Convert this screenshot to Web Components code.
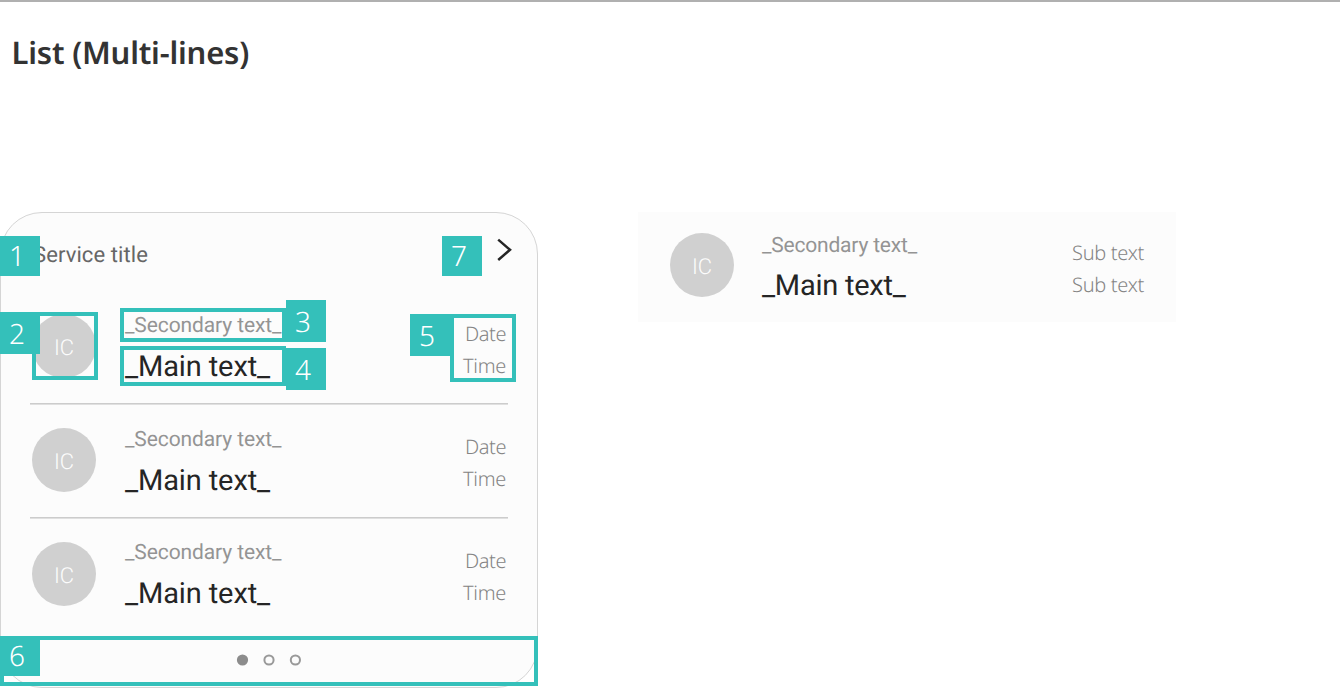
<!DOCTYPE html>
<html lang="en"><head><meta charset="utf-8"><title>List (Multi-lines)</title>
<style>html,body{margin:0;height:688px;overflow:hidden;background:#fff;text-rendering:geometricPrecision;-webkit-font-smoothing:antialiased}</style></head>
<body><guide-page></guide-page>
<script>
// Text line whose tracking is adjusted so that it fills the given advance width.
class FitText extends HTMLElement {
  connectedCallback() {
    this.attachShadow({mode:'open'}).innerHTML = `<style>:host{display:block;white-space:pre;width:max-content}span{display:inline-block}</style><span><slot></slot></span>`;
    const w = parseFloat(this.getAttribute('w')), s = this.shadowRoot.querySelector('span');
    if (w) s.style.letterSpacing = (w - s.getBoundingClientRect().width) / this.textContent.length + 'px';
  }
}

class ListRow extends HTMLElement {
  connectedCallback() {
    const a = this.getAttribute('first'), b = this.getAttribute('second'), w = this.getAttribute('sub-w').split(',');
    this.attachShadow({mode:'open'}).innerHTML = `<style>
      :host{display:flex;box-sizing:border-box;height:114px;padding:20px 32px 0}
      .ic{width:64px;height:64px;border-radius:50%;background:#d0d0d0;color:#fcfcfc;display:flex;justify-content:center;font:300 22px/70px Roboto,sans-serif;margin-top:var(--ic-top,4.4px)}
      .main{margin-left:var(--text-gap,29px);flex:1;color:#252525;font:29px/40px Roboto,sans-serif;padding-top:var(--main-top,1px)}
      .sec{color:#949494;font-size:21px;line-height:30px;margin-bottom:var(--line-gap,6px)}
      .sub{display:flex;flex-direction:column;align-items:flex-end;font:300 20px/32px "Noto Sans",sans-serif;color:#848484;padding-top:var(--sub-top,8px)}
    </style>
    <div class="ic"><fit-text w="20">IC</fit-text></div>
    <div class="main"><fit-text class="sec" w="${this.getAttribute('sec-w')||156.5}">_Secondary text_</fit-text><fit-text w="${this.getAttribute('main-w')||145}">_Main text_</fit-text></div>
    <div class="sub"><fit-text w="${w[0]}">${a}</fit-text><fit-text w="${w[1]}">${b}</fit-text></div>`;
  }
}

class CallOut extends HTMLElement {
  connectedCallback() {
    const [x,y,h] = this.getAttribute('at').split(',');
    this.attachShadow({mode:'open'}).innerHTML = `<style>
      :host{position:absolute;left:${x}px;top:${y}px;width:40px;height:${h}px;box-sizing:border-box;padding-left:9px;background:#34c0ba;color:#fff;font:300 28px/${+h===42?44:40}px "Noto Sans",sans-serif}
    </style><slot></slot>`;
  }
}

class CallFrame extends HTMLElement {
  connectedCallback() {
    const [x,y,w,h] = this.getAttribute('at').split(',');
    this.attachShadow({mode:'open'}).innerHTML = `<style>
      :host{position:absolute;box-sizing:border-box;border:4px solid #34c0ba;left:${x}px;top:${y}px;width:${w}px;height:${h}px}</style>`;
  }
}

class ServiceCard extends HTMLElement {
  connectedCallback() {
    this.attachShadow({mode:'open'}).innerHTML = `<style>
      :host{display:flex;flex-direction:column;box-sizing:border-box;width:538px;height:476px;border:1px solid #d5d5d5;border-radius:42px;background:#fcfcfc}
      header{height:77px;display:flex;justify-content:space-between;box-sizing:border-box;padding:24px 24px 0 32px;font:22px/38px Roboto,sans-serif;color:#666}
      .rows{margin:0 -1px}
      footer{display:flex;justify-content:center;padding-top:22px}
    </style>
    <header><fit-text w="115">Service title</fit-text><svg width="18" height="24"><path d="M3.2 2.6 15 12.8 3.2 23" fill="none" stroke="#252525" stroke-width="2.5"/></svg></header>
    <div class="rows"><slot></slot></div>
    <footer><svg width="66" height="14"><circle cx="6.5" cy="7" r="5.6" fill="#8c8c8c"/><g fill="none" stroke="#999" stroke-width="2"><circle cx="33" cy="7" r="4.6"/><circle cx="59.4" cy="7" r="4.6"/></g></svg></footer>`;
  }
}

class GuidePage extends HTMLElement {
  connectedCallback() {
    this.attachShadow({mode:'open'}).innerHTML = `<style>
      :host{display:block;box-sizing:border-box;height:688px;border-top:2px solid #b0b0b0;overflow:hidden}
      h1{margin:0;height:210px;box-sizing:border-box;padding:27px 0 0 11.5px;font:600 31px/48px "Noto Sans",sans-serif;color:#333}
      .demo{display:flex;gap:100px;align-items:flex-start}
      .annotated{position:relative;width:538px}
      hr{border:0;height:2px;background:linear-gradient(#ccc 1px,#e0e0e0 1px);margin:-1px 30px -1px}
      .plain{width:538px;height:110px;background:#fcfcfc;--ic-top:7.4px;--line-gap:5px;--text-gap:28px;--sub-top:11px;--main-top:5px}
      .plain list-row{height:110px;padding-top:14px}
      .r2{--sub-top:7px}
      .r3{height:113px;--sub-top:7px;--main-top:0px}
    </style>
    <h1><fit-text w="237.5">List (Multi-lines)</fit-text></h1>
    <div class="demo">
      <div class="annotated">
        <service-card>
          <list-row first="Date" second="Time" sub-w="41,43"></list-row><hr>
          <list-row class="r2" first="Date" second="Time" sub-w="41,43"></list-row><hr>
          <list-row class="r3" first="Date" second="Time" sub-w="41,43"></list-row>
        </service-card>
        <call-frame at="32,100,66,68"></call-frame><call-frame at="120,96,166,34"></call-frame>
        <call-frame at="120,134,166,40"></call-frame><call-frame at="450,102,66,68"></call-frame>
        <call-frame at="0,424,538,50"></call-frame>
        <call-out at="0,24,40">1</call-out><call-out at="0,100,42">2</call-out>
        <call-out at="286,88,42">3</call-out><call-out at="286,136,42">4</call-out>
        <call-out at="410,102,42">5</call-out><call-out at="0,424,40">6</call-out>
        <call-out at="442,24,40">7</call-out>
      </div>
      <div class="plain"><list-row first="Sub text" second="Sub text" sub-w="72,72" sec-w="155" main-w="143.5"></list-row></div>
    </div>`;
  }
}
customElements.define('fit-text', FitText);
customElements.define('list-row', ListRow);
customElements.define('call-out', CallOut);
customElements.define('call-frame', CallFrame);
customElements.define('service-card', ServiceCard);
customElements.define('guide-page', GuidePage);
</script></body></html>
